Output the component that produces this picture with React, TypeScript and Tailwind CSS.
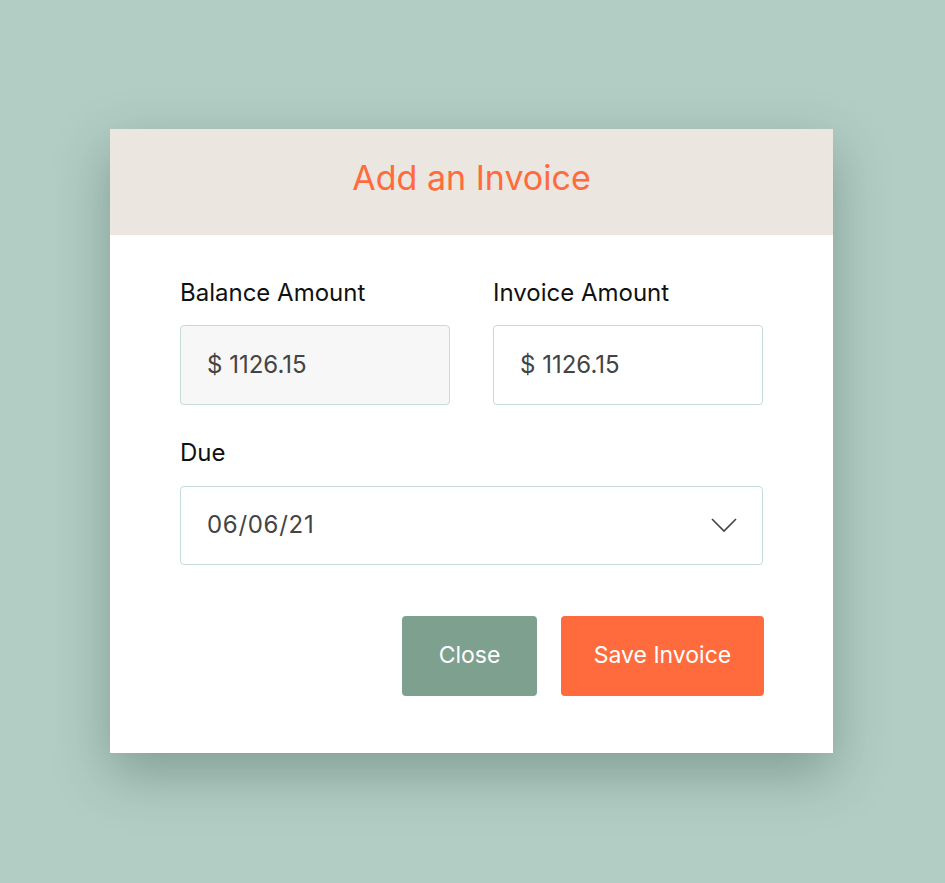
import React from "react";

export default function App() {
  const font = { fontFamily: "Inter, 'Noto Sans', sans-serif" };
  return (
    <div className="flex h-[883px] w-full items-center justify-center bg-[#b2cdc4] pb-[2px] pr-[2px]" style={font}>
      <div className="flex h-[624px] w-[723px] flex-col bg-white shadow-[0_20px_50px_rgba(40,70,60,0.35)]">
        <div className="flex h-[106px] items-center justify-center bg-[#ebe6df] pb-[8px]">
          <h1 className="text-[34px] font-normal text-[#ff6b3d]">Add an Invoice</h1>
        </div>
        <div className="flex flex-col px-[70px] pt-[44px]">
          <div className="flex gap-[43px]">
            <div className="flex w-[270px] flex-col">
              <label className="text-[24px] leading-[28px] text-[#111]">Balance Amount</label>
              <div className="mt-[18px] flex h-[80px] items-center rounded-[4px] border border-[#c5dcd4] bg-[#f7f7f7] pl-[26px] text-[24px] text-[#444]">
                $ 1126.15
              </div>
            </div>
            <div className="flex w-[270px] flex-col">
              <label className="text-[24px] leading-[28px] text-[#111]">Invoice Amount</label>
              <div className="mt-[18px] flex h-[80px] items-center rounded-[4px] border border-[#c5dcd4] bg-white pl-[26px] text-[24px] text-[#444]">
                $ 1126.15
              </div>
            </div>
          </div>
          <label className="mt-[34px] text-[24px] leading-[28px] text-[#111]">Due</label>
          <div className="mt-[19px] flex h-[79px] items-center justify-between rounded-[4px] border border-[#c5dcd4] bg-white pl-[26px] pr-[25px] text-[24px] text-[#444]">
            <span className="tracking-[0.7px]">06/06/21</span>
            <svg width="26" height="16" viewBox="0 0 26 16" fill="none">
              <path d="M1 2 L13 14 L25 2" stroke="#444" strokeWidth="1.6" />
            </svg>
          </div>
          <div className="-mr-[1px] mt-[51px] flex justify-end gap-[24px]">
            <button className="h-[80px] w-[135px] rounded-[4px] bg-[#7da08f] text-[23px] text-white">Close</button>
            <button className="h-[80px] w-[203px] rounded-[4px] bg-[#ff6b3d] text-[23px] text-white">Save Invoice</button>
          </div>
        </div>
      </div>
    </div>
  );
}
